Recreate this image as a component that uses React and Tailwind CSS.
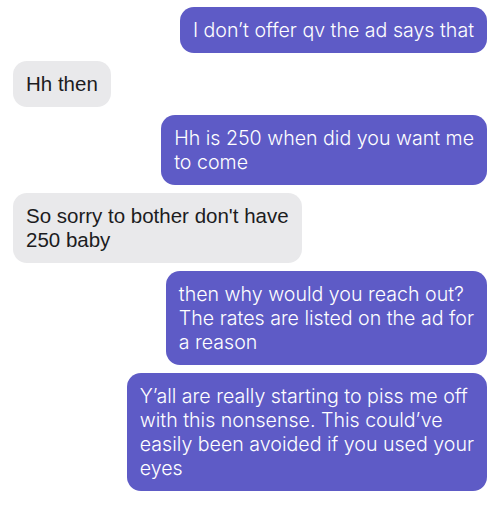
const messages = [
  { me: true, lines: ["I don’t offer qv the ad says that"] },
  { me: false, lines: ["Hh then"] },
  { me: true, lines: ["Hh is 250 when did you want me", "to come"] },
  { me: false, lines: ["So sorry to bother don't have", "250 baby"] },
  {
    me: true,
    lines: ["then why would you reach out?", "The rates are listed on the ad for", "a reason"],
  },
  {
    me: true,
    lines: [
      "Y’all are really starting to piss me off",
      "with this nonsense. This could’ve",
      "easily been avoided if you used your",
      "eyes",
    ],
  },
];

function Bubble({ me, lines }) {
  return (
    <div className={me ? "flex justify-end" : "flex justify-start"}>
      <div
        className={
          me
            ? "w-fit rounded-[14px] bg-[#5e5bc6] px-[13px] py-[11px] text-[19.6px] leading-[24px] font-light text-white font-['Inter',sans-serif] whitespace-nowrap"
            : "w-fit rounded-[14px] bg-[#e9e9eb] px-[13px] py-[11px] text-[20.5px] leading-[24px] text-[#1c1c1e] font-['Liberation_Sans',sans-serif] whitespace-nowrap"
        }
      >
        {lines.map((l, i) => (
          <div key={i}>{l}</div>
        ))}
      </div>
    </div>
  );
}

export default function App() {
  return (
    <div className="w-[500px] h-[508px] bg-white px-[13px] pt-[7px] flex flex-col gap-[8px] overflow-hidden">
      {messages.map((m, i) => (
        <Bubble key={i} me={m.me} lines={m.lines} />
      ))}
    </div>
  );
}
